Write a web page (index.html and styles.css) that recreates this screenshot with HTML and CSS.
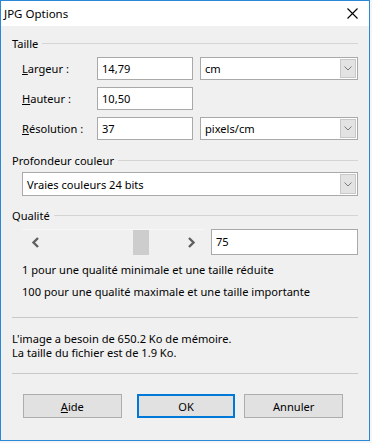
FILE: index.html
```html
<!DOCTYPE html>
<html>
<head>
    <title>JPG Options</title>
    <link rel="stylesheet" href="styles.css">
</head>
<body>
    <div class="window">
        <div class="titlebar">
            <span class="title">JPG Options</span>
            <svg class="close" width="11" height="11" viewBox="0 0 11 11">
                <path d="M0.5 0.5 L10.5 10.5 M10.5 0.5 L0.5 10.5" stroke="#000" stroke-width="1.1" fill="none"/>
            </svg>
        </div>

        <div class="content">
            <div class="group-title"><span>Taille</span><div class="rule"></div></div>
            <div class="size-grid">
                <label class="field-label"><u>L</u>argeur :</label>
                <div class="textbox">14,79</div>
                <div class="combo"><span>cm</span><div class="combo-button"><svg width="8" height="5" viewBox="0 0 8 5"><path d="M0.5 0.5 L4 4 L7.5 0.5" stroke="#7a7a7a" fill="none"/></svg></div></div>

                <label class="field-label"><u>H</u>auteur :</label>
                <div class="textbox">10,50</div>
                <div></div>

                <label class="field-label"><u>R</u>ésolution :</label>
                <div class="textbox">37</div>
                <div class="combo"><span>pixels/cm</span><div class="combo-button"><svg width="8" height="5" viewBox="0 0 8 5"><path d="M0.5 0.5 L4 4 L7.5 0.5" stroke="#7a7a7a" fill="none"/></svg></div></div>
            </div>

            <div class="group-title depth-title"><span>Profondeur couleur</span><div class="rule"></div></div>
            <div class="combo wide-combo"><span>Vraies couleurs 24 bits</span><div class="combo-button"><svg width="8" height="5" viewBox="0 0 8 5"><path d="M0.5 0.5 L4 4 L7.5 0.5" stroke="#7a7a7a" fill="none"/></svg></div></div>

            <div class="group-title quality-title"><span>Qualité</span><div class="rule"></div></div>
            <div class="quality-row">
                <div class="scrollbar">
                    <div class="arrow">
                        <svg width="9" height="11" viewBox="0 0 9 11"><path d="M7 1 L2.5 5.5 L7 10" stroke="#606060" stroke-width="2.4" fill="none"/></svg>
                    </div>
                    <div class="track"><div class="thumb"></div></div>
                    <div class="arrow">
                        <svg width="9" height="11" viewBox="0 0 9 11"><path d="M2 1 L6.5 5.5 L2 10" stroke="#606060" stroke-width="2.4" fill="none"/></svg>
                    </div>
                </div>
                <div class="textbox quality-box">75</div>
            </div>
            <p class="hint first-hint">1 pour une qualité minimale et une taille réduite</p>
            <p class="hint">100 pour une qualité maximale et une taille importante</p>

            <div class="separator first-sep"></div>
            <p class="info">L'image a besoin de 650.2 Ko de mémoire.</p>
            <p class="info">La taille du fichier est de 1.9 Ko.</p>
            <div class="separator second-sep"></div>

            <div class="buttons">
                <button class="btn"><u>A</u>ide</button>
                <button class="btn default">OK</button>
                <button class="btn">Annuler</button>
            </div>
        </div>
    </div>
</body>
</html>
```

FILE: styles.css
```css
/* Page and dialog frame */
body {
    margin: 0;
    background-color: #f5f5f5;
    font-family: "Noto Sans", "Open Sans", sans-serif;
    font-size: 11.1px;
    color: #000;
}

.window {
    width: 370px;
    height: 441px;
    box-sizing: border-box;
    border: 1px solid #2b88d8;
    background-color: #f0f0f0;
    display: flex;
    flex-direction: column;
}

/* Title bar */
.titlebar {
    height: 25px;
    background-color: #fff;
    display: flex;
    align-items: center;
    justify-content: space-between;
    padding: 0 11px 0 3px;
}

.title {
    font-size: 11.5px;
}

.content {
    padding: 10px 11px 0 11px;
    display: flex;
    flex-direction: column;
}

/* Group headings with a line after them */
.group-title {
    display: flex;
    align-items: center;
    height: 14px;
    gap: 4px;
}

.rule {
    flex: 1;
    border-top: 1px solid #d5d5d5;
    margin-top: 1px;
}

.depth-title {
    margin-top: 13px;
}

.quality-title {
    margin-top: 12px;
}

/* Size fields */
.size-grid {
    display: grid;
    grid-template-columns: 68px 96px 158px;
    grid-auto-rows: 23px;
    column-gap: 7px;
    row-gap: 7px;
    margin: 7px 0 0 10px;
    align-items: center;
}

.field-label {
    line-height: 23px;
}

.textbox {
    height: 23px;
    box-sizing: border-box;
    border: 1px solid #a9a9a9;
    background-color: #fff;
    padding: 0 4px;
    line-height: 21px;
}

/* Drop-down boxes */
.combo {
    height: 23px;
    box-sizing: border-box;
    border: 1px solid #a9a9a9;
    background-color: #fff;
    display: flex;
    align-items: center;
    justify-content: space-between;
    padding-left: 4px;
}

.combo-button {
    width: 16px;
    height: 19px;
    margin-right: 1px;
    box-sizing: border-box;
    border: 1px solid #c8c8c8;
    background-color: #e3e3e3;
    display: flex;
    align-items: center;
    justify-content: center;
}

.wide-combo {
    margin: 5px 0 0 10px;
    height: 24px;
}

.wide-combo .combo-button {
    height: 20px;
}

/* Quality scroll bar and value */
.quality-row {
    display: flex;
    gap: 7px;
    margin: 7px 0 0 10px;
}

.scrollbar {
    width: 182px;
    height: 26px;
    display: flex;
    border-top: 1px solid #f7f7f7;
    box-sizing: border-box;
}

.arrow {
    width: 26px;
    display: flex;
    align-items: center;
    justify-content: center;
}

.track {
    flex: 1;
    padding-left: 85px;
}

.thumb {
    width: 16px;
    height: 25px;
    background-color: #cdcdcd;
}

.quality-box {
    flex: 1;
    height: 26px;
    line-height: 24px;
}

/* Hint and info texts */
.hint {
    margin: 0 0 0 10px;
    line-height: 22px;
}

.first-hint {
    margin-top: 4px;
}

.info {
    margin: 0;
    line-height: 14px;
}

.separator {
    border-top: 1px solid #c8c8c8;
}

.first-sep {
    margin: 14px 0 14px 0;
}

.second-sep {
    margin-top: 13px;
}

/* Dialog buttons */
.buttons {
    display: flex;
    margin: 20px 0 0 11px;
}

.btn {
    width: 100px;
    height: 24px;
    margin-right: 15px;
    border: 1px solid #adadad;
    background-color: #e1e1e1;
    font-family: "Noto Sans", "Open Sans", sans-serif;
    font-size: 11.1px;
    color: #000;
    padding: 0;
}

.btn.default {
    border: 2px solid #0078d7;
    margin-right: 9px;
}
```
